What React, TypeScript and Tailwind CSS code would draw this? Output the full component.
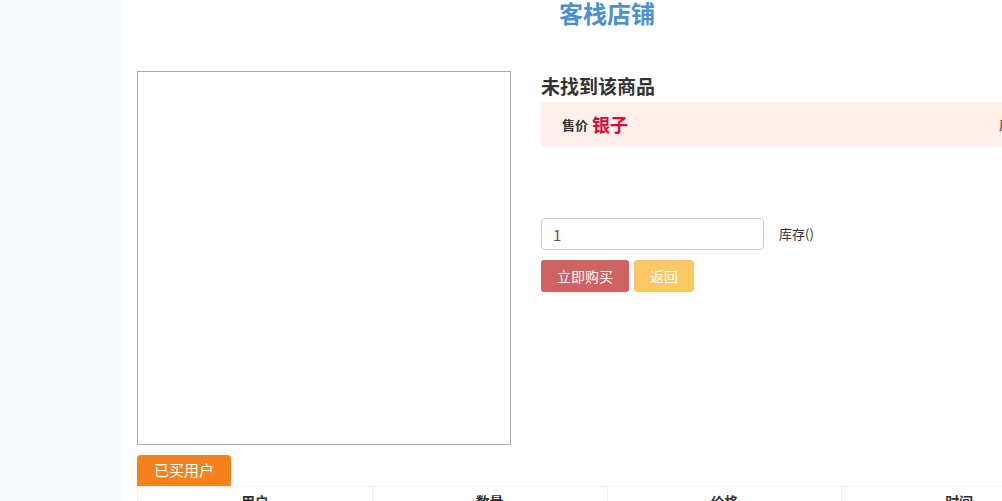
import React from 'react';

const font = { fontFamily: '"Noto Sans CJK SC", "Noto Sans", sans-serif' };

export default function App() {
  const cols = ['用户', '数量', '价格', '时间'];

  return (
    <div className="flex min-h-screen w-[1092px] bg-white text-[#333]" style={font}>
      {/* left rail */}
      <aside className="w-[122px] shrink-0 bg-[#f7fbfe]" />

      <main className="w-[970px] shrink-0 px-[15px]">
        <h1 className="h-[28px] text-center text-[24px] font-bold leading-[26px] text-[#4a90d4]">客栈店铺</h1>

        <div className="mt-[43px] flex gap-[30px]">
          <div className="h-[374px] w-[374px] shrink-0 border border-[#aaa]" />

          <div className="flex-1">
            <h2 className="pt-[1px] text-[19px] font-bold leading-[28px] text-[#333]">未找到该商品</h2>
            <div className="mt-[2px] flex h-[45px] items-center bg-[#fff1e9] pl-[21px]">
              <span className="text-[13px] font-bold text-[#333]">售价</span>
              <span className="ml-[4px] text-[18px] font-bold text-[#e6003c]">银子</span>
              <span className="ml-[371px] text-[13px] text-[#333]">原价</span>
            </div>

            <div className="mt-[71px] flex items-center">
              <input
                defaultValue="1"
                className="h-[32px] w-[223px] rounded-[4px] border border-[#ccc] px-[11px] text-[15px] text-[#555] outline-none"
              />
              <span className="ml-[15px] text-[13px] text-[#333]">库存()</span>
            </div>

            <div className="mt-[10px] flex gap-[5px]">
              <button className="h-[32px] w-[88px] rounded-[3px] bg-[#cf6262] text-[14px] text-white">立即购买</button>
              <button className="h-[32px] w-[60px] rounded-[3px] bg-[#fcc864] text-[14px] text-white">返回</button>
            </div>
          </div>
        </div>

        <div className="mt-[10px]">
          <div className="flex">
            <span className="flex h-[31px] w-[94px] items-center justify-center rounded-t-[4px] bg-[#f5821f] text-[15px] text-white">
              已买用户
            </span>
          </div>
          <table className="w-[940px] border-collapse border-t border-[#eee]">
            <thead>
              <tr>
                {cols.map((c) => (
                  <th
                    key={c}
                    className="h-[36px] w-1/4 border border-[#eee] pt-[4px] align-top text-[14px] font-bold text-[#333]"
                  >
                    {c}
                  </th>
                ))}
              </tr>
            </thead>
          </table>
        </div>
      </main>
    </div>
  );
}
